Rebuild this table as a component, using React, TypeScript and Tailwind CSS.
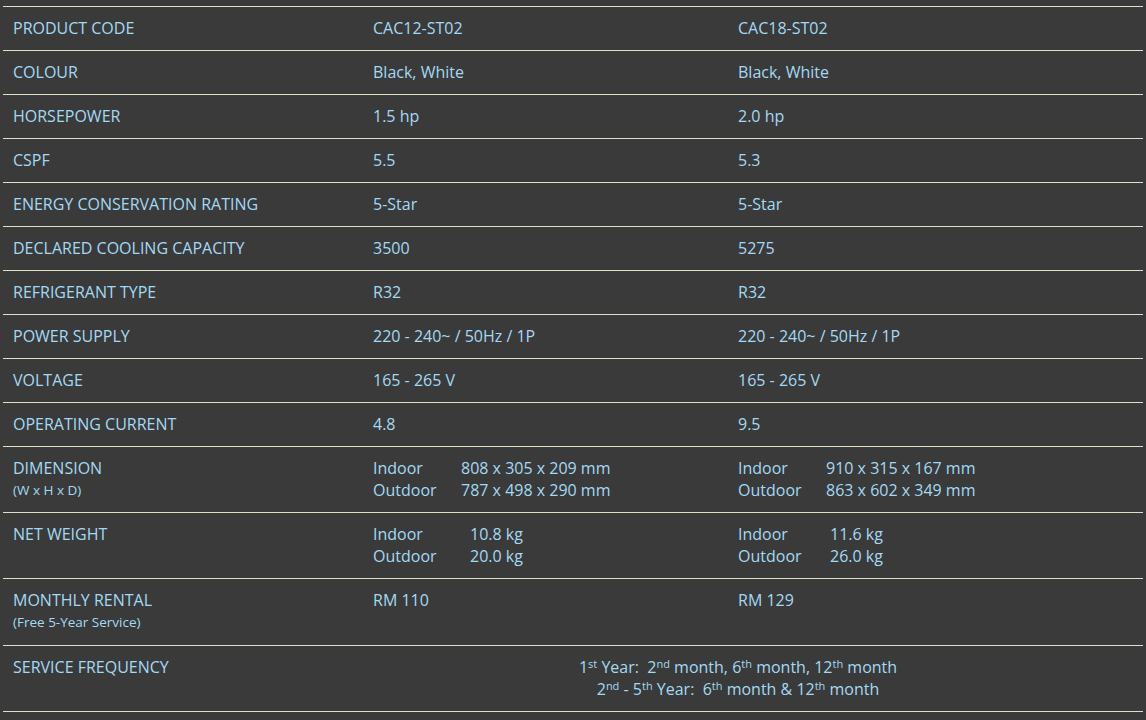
import type { ReactNode } from "react";

const rows: { label: string; a: string; b: string }[] = [
  { label: "PRODUCT CODE", a: "CAC12-ST02", b: "CAC18-ST02" },
  { label: "COLOUR", a: "Black, White", b: "Black, White" },
  { label: "HORSEPOWER", a: "1.5 hp", b: "2.0 hp" },
  { label: "CSPF", a: "5.5", b: "5.3" },
  { label: "ENERGY CONSERVATION RATING", a: "5-Star", b: "5-Star" },
  { label: "DECLARED COOLING CAPACITY", a: "3500", b: "5275" },
  { label: "REFRIGERANT TYPE", a: "R32", b: "R32" },
  { label: "POWER SUPPLY", a: "220 - 240~ / 50Hz / 1P", b: "220 - 240~ / 50Hz / 1P" },
  { label: "VOLTAGE", a: "165 - 265 V", b: "165 - 265 V" },
  { label: "OPERATING CURRENT", a: "4.8", b: "9.5" },
];

const Row = ({ children }: { children: ReactNode }) => (
  <div className="flex border-t border-[#e4dcc9] pt-[10px] pb-[11px]">{children}</div>
);

const Label = ({ children }: { children: ReactNode }) => (
  <div className="w-[360px] shrink-0 pl-[10px]">{children}</div>
);

const Mid = ({ children }: { children: ReactNode }) => (
  <div className="w-[365px] shrink-0 pl-[10px]">{children}</div>
);

const Last = ({ children }: { children: ReactNode }) => (
  <div className="flex-1 pl-[10px]">{children}</div>
);

const Pair = ({ w, indoor, outdoor }: { w: string; indoor: string; outdoor: string }) => (
  <div className="flex flex-col">
    <div className="flex">
      <span className={w}>Indoor</span>
      <span>{indoor}</span>
    </div>
    <div className="flex">
      <span className={w}>Outdoor</span>
      <span>{outdoor}</span>
    </div>
  </div>
);

const Sup = ({ children }: { children: ReactNode }) => (
  <sup className="text-[11px] leading-none top-[-0.45em]">{children}</sup>
);

export default function App() {
  return (
    <div
      className="w-[1146px] h-[720px] bg-[#3a3a3a] pt-[6px] px-[3px] text-[16px] leading-[22px] text-[#a4d9f4]"
      style={{ fontFamily: '"Open Sans", "Noto Sans", sans-serif' }}
    >
      <div className="border-b border-[#e4dcc9]">
        {rows.map((r) => (
          <Row key={r.label}>
            <Label>{r.label}</Label>
            <Mid>{r.a}</Mid>
            <Last>{r.b}</Last>
          </Row>
        ))}

        <Row>
          <Label>
            <div>DIMENSION</div>
            <div className="text-[13.5px]">(W x H x D)</div>
          </Label>
          <Mid>
            <Pair w="w-[88px]" indoor="808 x 305 x 209 mm" outdoor="787 x 498 x 290 mm" />
          </Mid>
          <Last>
            <Pair w="w-[88px]" indoor="910 x 315 x 167 mm" outdoor="863 x 602 x 349 mm" />
          </Last>
        </Row>

        <Row>
          <Label>NET WEIGHT</Label>
          <Mid>
            <Pair w="w-[97px]" indoor="10.8 kg" outdoor="20.0 kg" />
          </Mid>
          <Last>
            <Pair w="w-[92px]" indoor="11.6 kg" outdoor="26.0 kg" />
          </Last>
        </Row>

        <Row>
          <Label>
            <div>MONTHLY RENTAL</div>
            <div className="text-[13.5px] leading-[23px]">(Free 5-Year Service)</div>
          </Label>
          <Mid>RM 110</Mid>
          <Last>RM 129</Last>
        </Row>

        <Row>
          <Label>SERVICE FREQUENCY</Label>
          <div className="flex-1 pr-[30px] text-center">
            <div>
              1<Sup>st</Sup> Year:&nbsp; 2<Sup>nd</Sup> month, 6<Sup>th</Sup> month, 12<Sup>th</Sup> month
            </div>
            <div>
              2<Sup>nd</Sup> - 5<Sup>th</Sup> Year:&nbsp; 6<Sup>th</Sup> month &amp; 12<Sup>th</Sup> month
            </div>
          </div>
        </Row>
      </div>
    </div>
  );
}
